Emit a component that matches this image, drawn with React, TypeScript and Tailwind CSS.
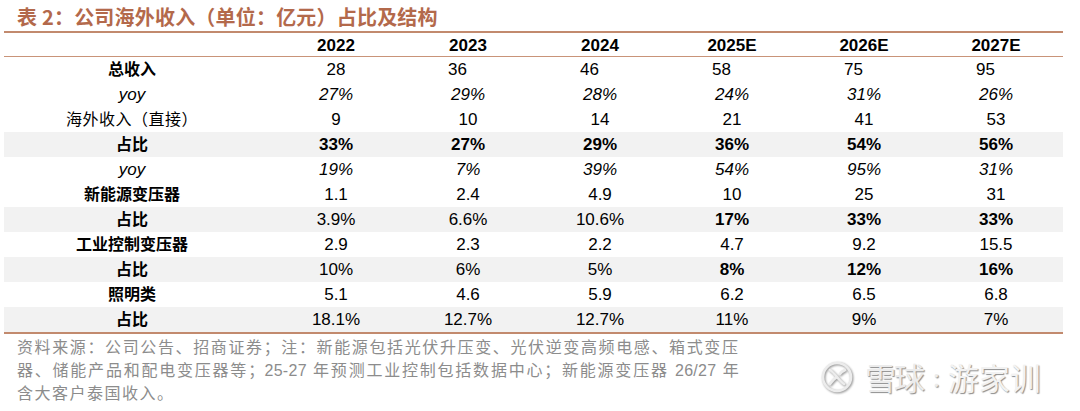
import * as React from "react"

type Row = {
  label: string
  labelStyle: "bold" | "italic" | "normal"
  vals: string[]
  italic?: boolean
  boldFrom?: number
  shaded?: boolean
  leftAlign?: boolean
}

const years = ["2022", "2023", "2024", "2025E", "2026E", "2027E"]

const rows: Row[] = [
  { label: "总收入", labelStyle: "bold", vals: ["28", "36", "46", "58", "75", "95"], leftAlign: true },
  { label: "yoy", labelStyle: "italic", vals: ["27%", "29%", "28%", "24%", "31%", "26%"], italic: true },
  { label: "海外收入（直接）", labelStyle: "normal", vals: ["9", "10", "14", "21", "41", "53"] },
  { label: "占比", labelStyle: "bold", vals: ["33%", "27%", "29%", "36%", "54%", "56%"], boldFrom: 0, shaded: true },
  { label: "yoy", labelStyle: "italic", vals: ["19%", "7%", "39%", "54%", "95%", "31%"], italic: true },
  { label: "新能源变压器", labelStyle: "bold", vals: ["1.1", "2.4", "4.9", "10", "25", "31"] },
  { label: "占比", labelStyle: "bold", vals: ["3.9%", "6.6%", "10.6%", "17%", "33%", "33%"], boldFrom: 3, shaded: true },
  { label: "工业控制变压器", labelStyle: "bold", vals: ["2.9", "2.3", "2.2", "4.7", "9.2", "15.5"] },
  { label: "占比", labelStyle: "bold", vals: ["10%", "6%", "5%", "8%", "12%", "16%"], boldFrom: 3, shaded: true },
  { label: "照明类", labelStyle: "bold", vals: ["5.1", "4.6", "5.9", "6.2", "6.5", "6.8"] },
  { label: "占比", labelStyle: "bold", vals: ["18.1%", "12.7%", "12.7%", "11%", "9%", "7%"], shaded: true },
]

const font = "font-['Liberation_Sans','Noto_Sans_CJK_SC',sans-serif]"

function XueqiuLogo() {
  return (
    <svg width="32" height="32" viewBox="0 0 32 32" className="drop-shadow-[1px_1px_1px_rgba(0,0,0,0.45)]">
      <circle cx="16" cy="16" r="14" fill="none" stroke="#ececec" strokeWidth="2.6" />
      <path d="M9 9 C 14 12, 18 20, 23 23" fill="none" stroke="#ececec" strokeWidth="2.6" strokeLinecap="round" />
      <path d="M9 23 C 12 19, 14 17, 16 16" fill="none" stroke="#ececec" strokeWidth="2.6" strokeLinecap="round" />
      <path d="M19 13 C 20 11, 22 10, 24 9" fill="none" stroke="#ececec" strokeWidth="2.6" strokeLinecap="round" />
    </svg>
  )
}

export default function App() {
  return (
    <div className={`relative w-[1080px] h-[411px] bg-white overflow-hidden ${font}`}>
      <div className="h-[31px] pl-[17px] pt-[4px] text-[20px] leading-[26px] font-bold tracking-[0.2px] text-[#b3694b] font-['Noto_Sans_CJK_SC',sans-serif] whitespace-nowrap">
        表 2：公司海外收入（单位：亿元）占比及结构
      </div>

      <div className="ml-[4px] w-[1059px] border-t-2 border-b-2 border-[#c28a6e]">
        <div className="grid grid-cols-[266px_repeat(6,132px)] h-[24px] items-center border-b border-[#c99479] text-[17px] font-bold text-black">
          <div />
          {years.map((y) => (
            <div key={y} className="text-center">{y}</div>
          ))}
        </div>
        {rows.map((r, i) => (
          <div
            key={i}
            className={`grid grid-cols-[266px_repeat(6,132px)] h-[25px] items-center text-[17px] text-black ${r.shaded ? "bg-[#f2f2f2]" : ""}`}
          >
            <div
              className={`text-center pr-[10px] ${
                r.labelStyle === "bold" ? "font-bold text-[16px]" : r.labelStyle === "italic" ? "italic" : "text-[16px] tracking-[0.5px]"
              }`}
            >
              {r.label}
            </div>
            {r.vals.map((v, j) => (
              <div
                key={j}
                className={`${r.leftAlign && j > 0 ? "text-left pl-[46px]" : "text-center"} ${r.italic ? "italic" : ""} ${
                  r.boldFrom !== undefined && j >= r.boldFrom ? "font-bold" : ""
                }`}
              >
                {v}
              </div>
            ))}
          </div>
        ))}
      </div>

      <div className="pl-[17px] pt-[2px] text-[16px] leading-[23px] text-[#8c8c8c] font-['Liberation_Sans','Noto_Sans_CJK_SC',sans-serif]">
        <div className="w-[722px] tracking-[1px] text-justify [text-align-last:justify] whitespace-nowrap">
          资料来源：公司公告、招商证券；注：新能源包括光伏升压变、光伏逆变高频电感、箱式变压
        </div>
        <div className="w-[722px] tracking-[0.3px] text-justify [text-align-last:justify]">
          器、储能产品和配电变压器等；25-27 年预测工业控制包括数据中心；新能源变压器 26/27 年
        </div>
        <div className="tracking-[1.5px]">含大客户泰国收入。</div>
      </div>

      <div className="absolute left-[821px] top-[359px] flex items-center text-[31px] leading-[36px] text-[#ececec] font-['Noto_Sans_CJK_SC',sans-serif] [text-shadow:1px_1px_1px_rgba(0,0,0,0.45)]">
        <XueqiuLogo />
        <span className="ml-[12px] tracking-[-2px]">雪球</span>
        <span className="ml-[10px] mr-[8px] text-[24px]">:</span>
        <span className="tracking-[0px] text-[#f2f2f2]">游家训</span>
      </div>
    </div>
  )
}
